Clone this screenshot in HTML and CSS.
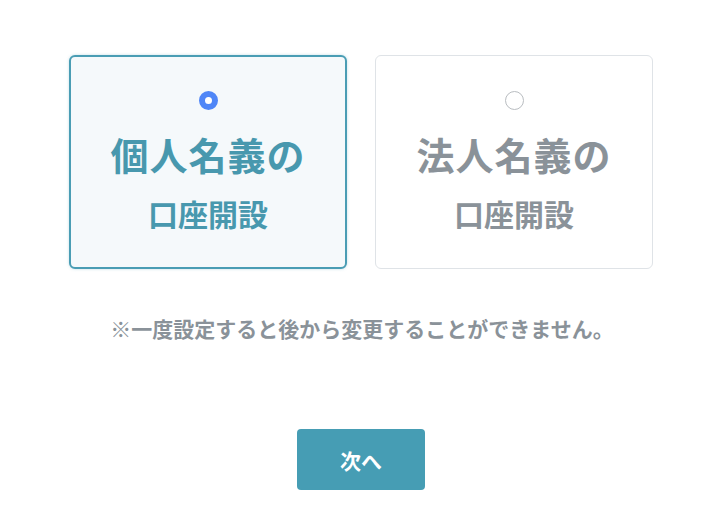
FILE: index.html
```html
<!DOCTYPE html>
<html lang="ja">

<head>
    <meta charset="UTF-8">
    <meta name="viewport" content="width=device-width, initial-scale=1.0">
    <title>口座開設</title>
    <link rel="stylesheet" href="styles.css">
</head>

<body>
    <div class="wrapper">
        <!-- Account type choice -->
        <div class="choices">
            <label class="choice selected">
                <span class="radio"></span>
                <span class="title">個人名義の</span>
                <span class="sub">口座開設</span>
            </label>
            <label class="choice">
                <span class="radio"></span>
                <span class="title">法人名義の</span>
                <span class="sub">口座開設</span>
            </label>
        </div>

        <p class="note">※一度設定すると後から変更することができません。</p>

        <button class="next">次へ</button>
    </div>
</body>

</html>
```

FILE: styles.css
```css
body {
    font-family: "Noto Sans CJK JP", "Noto Sans", sans-serif;
    margin: 0;
    padding: 0;
    background-color: #fff;
}

.wrapper {
    display: flex;
    flex-direction: column;
    align-items: center;
    padding-top: 55px;
}

.choices {
    display: flex;
    gap: 28px;
    margin-right: 2px;
}

.choice {
    box-sizing: border-box;
    width: 278px;
    height: 214px;
    display: flex;
    flex-direction: column;
    align-items: center;
    padding-top: 35px;
    border: 1px solid #dfe3e7;
    border-radius: 6px;
    background-color: #fff;
    color: #8a9299;
    font-weight: bold;
    cursor: pointer;
}

.choice.selected {
    border: 2px solid #4a9db4;
    padding-top: 34px;
    background-color: #f5f9fb;
    color: #4898ae;
    box-shadow: 0 0 3px rgba(74, 157, 180, 0.35);
}

.radio {
    box-sizing: border-box;
    width: 19px;
    height: 19px;
    border-radius: 50%;
    border: 1px solid #b9bdc1;
    background-color: #fff;
}

.selected .radio {
    border: 6px solid #4f86f7;
}

.title {
    margin-top: 21px;
    font-size: 38px;
    line-height: 46px;
    letter-spacing: 1px;
}

.sub {
    margin-top: 18px;
    font-size: 30px;
    line-height: 36px;
}

.note {
    margin: 44px 0 0 0;
    font-size: 21px;
    line-height: 30px;
    font-weight: bold;
    color: #8a9299;
}

.next {
    margin: 86px 2px 0 0;
    width: 128px;
    height: 61px;
    border: none;
    border-radius: 4px;
    background-color: #469db4;
    color: #fff;
    font-family: inherit;
    font-size: 21px;
    font-weight: bold;
    cursor: pointer;
}
```
